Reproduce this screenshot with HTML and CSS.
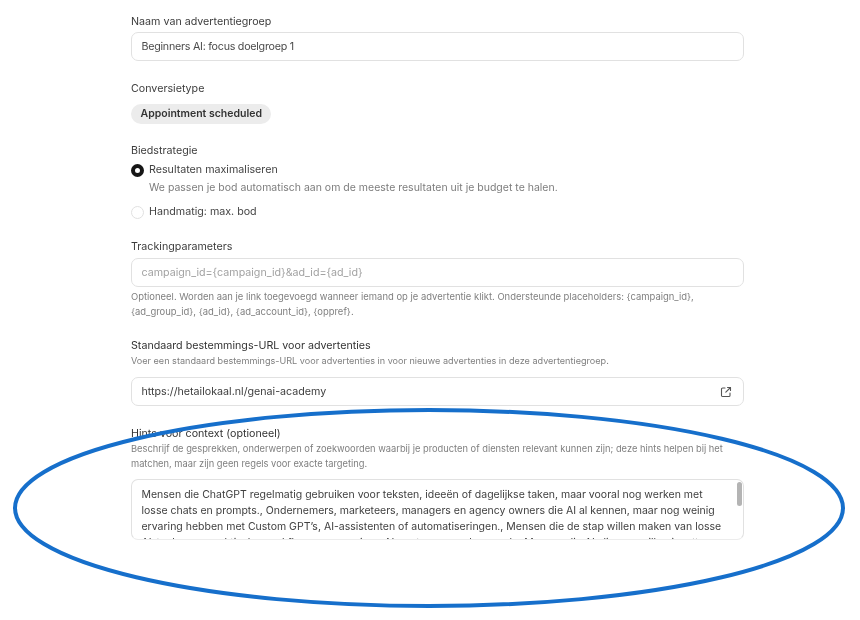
FILE: index.html
```html
<!DOCTYPE html>
<html lang="nl">
<head>
<meta charset="utf-8">
<title>Advertentiegroep</title>
<link rel="stylesheet" href="styles.css">
</head>
<body>
<main class="form">
  <section class="field name-field">
    <div class="label">Naam van advertentiegroep</div>
    <div class="input">Beginners AI: focus doelgroep 1</div>
  </section>
  <section class="field conv-field">
    <div class="label">Conversietype</div>
    <div><span class="chip">Appointment scheduled</span></div>
  </section>
  <section class="field bid-field">
    <div class="label">Biedstrategie</div>
    <div class="radio-row"><span class="radio on"></span><span>Resultaten maximaliseren</span></div>
    <div class="radio-desc">We passen je bod automatisch aan om de meeste resultaten uit je budget te halen.</div>
    <div class="radio-row second"><span class="radio"></span><span>Handmatig: max. bod</span></div>
  </section>
  <section class="field track-field">
    <div class="label">Trackingparameters</div>
    <div class="input placeholder">campaign_id={campaign_id}&amp;ad_id={ad_id}</div>
    <p class="help after">Optioneel. Worden aan je link toegevoegd wanneer iemand op je advertentie klikt. Ondersteunde placeholders: {campaign_id}, {ad_group_id}, {ad_id}, {ad_account_id}, {oppref}.</p>
  </section>
  <section class="field url-field">
    <div class="label">Standaard bestemmings-URL voor advertenties</div>
    <p class="help">Voer een standaard bestemmings-URL voor advertenties in voor nieuwe advertenties in deze advertentiegroep.</p>
    <div class="input with-icon">
      <span>https://hetailokaal.nl/genai-academy</span>
      <svg class="ext" viewBox="0 0 12 12" width="12" height="12" fill="none" stroke="#555" stroke-width="1.1" stroke-linecap="round" stroke-linejoin="round"><path d="M5 2H2.600A1.100 1.100 0 0 0 1.500 3.100v6.300a1.100 1.100 0 0 0 1.100 1.100h6.300A1.100 1.100 0 0 0 10 9.400V7"/><path d="M7.500 1.500h3v3M10.500 1.500 5.800 6.200"/></svg>
    </div>
  </section>
  <section class="field hint-field">
    <div class="label">Hints voor context (optioneel)</div>
    <p class="help">Beschrijf de gesprekken, onderwerpen of zoekwoorden waarbij je producten of diensten relevant kunnen zijn; deze hints helpen bij het matchen, maar zijn geen regels voor exacte targeting.</p>
    <div class="textarea">
      <div class="textarea-text">Mensen die ChatGPT regelmatig gebruiken voor teksten, ideeën of dagelijkse taken, maar vooral nog werken met losse chats en prompts., Ondernemers, marketeers, managers en agency owners die AI al kennen, maar nog weinig ervaring hebben met Custom GPT’s, AI-assistenten of automatiseringen., Mensen die de stap willen maken van losse AI-tools naar praktische workflows en een eigen AI-systeem voor hun werk., Mensen die AI slimmer willen inzetten</div>
      <span class="thumb"></span>
    </div>
  </section>
</main>
<svg class="circle" viewBox="0 0 860 620" width="860" height="620" fill="none"><ellipse cx="429" cy="508" rx="414" ry="98" stroke="#166fcb" stroke-width="4"/></svg>
</body>
</html>
```

FILE: styles.css
```css
* { box-sizing: border-box; }
html, body { margin: 0; padding: 0; background: #fff; }
body {
  position: relative;
  width: 860px;
  height: 620px;
  overflow: hidden;
  font-family: Inter, "Liberation Sans", sans-serif;
  color: #3a3a3a;
}
.form {
  width: 613px;
  margin-left: 131px;
  padding-top: 15px;
  display: flex;
  flex-direction: column;
  filter: blur(0.35px);
}
.label { font-size: 10.7px; line-height: 14px; color: #3d3d3d; }
.input {
  height: 29px;
  margin-top: 3px;
  padding: 0 11px 0 9.500px;
  display: flex;
  align-items: center;
  justify-content: space-between;
  border: 1px solid #e1e1e1;
  border-radius: 7px;
  font-size: 10.7px;
  color: #4a4a4a;
  background: #fff;
}
.name-field .input { letter-spacing: -0.25px; }
.input.placeholder { color: #a2a2a2; }
.track-field .input { margin-top: 4px; }
.conv-field { margin-top: 21px; }
.chip {
  display: inline-block;
  margin-top: 8px;
  padding: 0 9.500px;
  height: 20px;
  line-height: 20px;
  border-radius: 10px;
  background: #ececec;
  font-size: 10.5px;
  font-weight: 600;
  color: #333;
}
.bid-field { margin-top: 20px; }
.radio-row { display: flex; align-items: center; gap: 5px; font-size: 10.7px; line-height: 14px; margin-top: 5px; color: #444; }
.radio-row.second { margin-top: 10px; }
.radio { width: 13px; height: 13px; border-radius: 50%; border: 1px solid #e0e0e0; background: #fff; }
.radio.on { border: 4px solid #161616; }
.radio-desc { margin: 4px 0 0 18px; font-size: 10.5px; line-height: 14px; color: #7d7d7d; }
.track-field { margin-top: 21px; }
.help { margin: 0; font-size: 9.450px; line-height: 15px; color: #7f7f7f; }
.help.after { margin-top: 2px; }
.url-field { margin-top: 20px; }
.url-field .help { font-size: 9.100px; }
.url-field .label, .hint-field .label { color: #333; }
.url-field .input { margin-top: 9px; color: #3d3d3d; }
.hint-field { margin-top: 21px; }
.hint-field .help { font-size: 9.300px; }
.textarea {
  position: relative;
  height: 61px;
  margin-top: 8px;
  padding: 7px 10px 0 9.500px;
  overflow: hidden;
  border: 1px solid #e1e1e1;
  border-bottom-color: #ececec;
  border-radius: 7px;
  font-size: 10.5px;
  line-height: 16px;
  color: #404040;
}
.textarea-text { width: 582px; }
.thumb { position: absolute; top: 2px; right: 1px; width: 5px; height: 24px; border-radius: 3px; background: #b4b4b4; }
.ext { flex: none; }
.circle { position: absolute; left: 0; top: 0; pointer-events: none; }
```
